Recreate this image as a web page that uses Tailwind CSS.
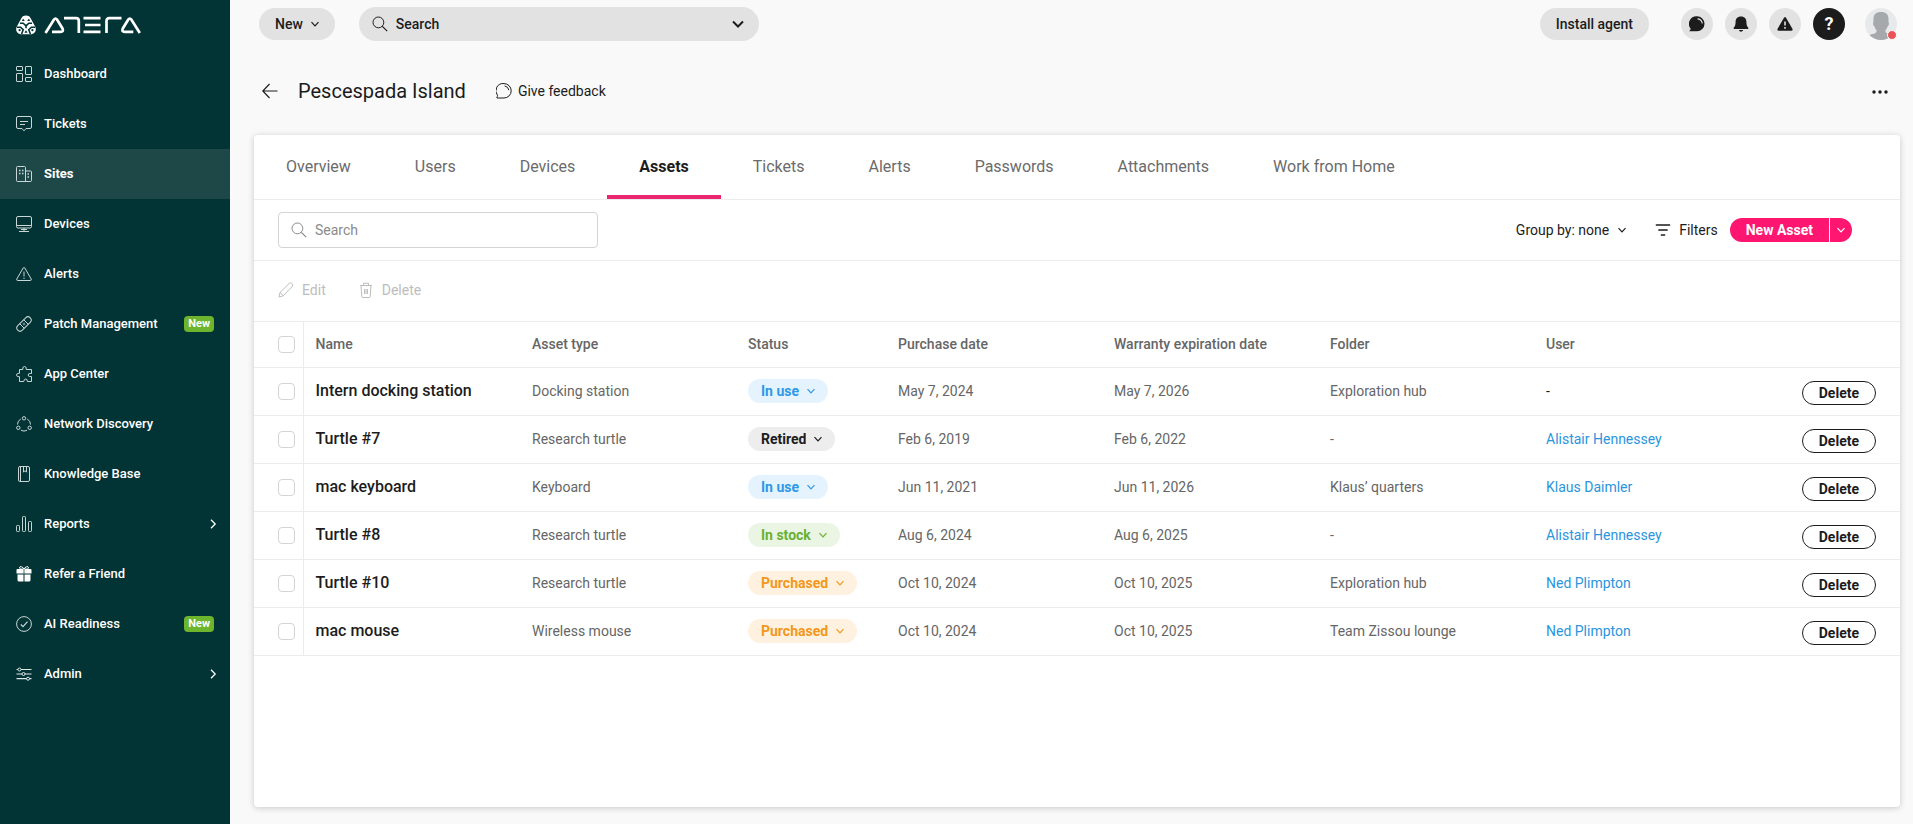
<!DOCTYPE html>
<html lang="en">

<head>
    <meta charset="UTF-8">
    <meta name="viewport" content="width=device-width, initial-scale=1.0">
    <title>Pescespada Island - Assets</title>
    <script src="https://cdn.jsdelivr.net/npm/@tailwindcss/browser@4"></script>
</head>

<body class="flex min-h-screen bg-[#f9f9f9] font-['Roboto',sans-serif] text-sm text-[#1c1c1c]">

    <!-- Shared icons -->
    <svg class="hidden">
        <symbol id="chevron-down" viewBox="0 0 10 10">
            <path d="M1.5 3.2 5 6.8 8.5 3.2" fill="none" stroke="currentColor" stroke-width="1.2" />
        </symbol>
        <symbol id="chevron-right" viewBox="0 0 10 10">
            <path d="M3 .8 7.2 5 3 9.2" fill="none" stroke="currentColor" stroke-width="1.3" />
        </symbol>
        <symbol id="search" viewBox="0 0 16 16">
            <g fill="none" stroke="currentColor">
                <circle cx="6.4" cy="6.4" r="5.4" />
                <path d="m10.3 10.3 4.9 4.9" stroke-width="1.2" />
            </g>
        </symbol>
    </svg>

    <!-- Sidebar -->
    <aside class="w-[230px] shrink-0 bg-[#023335] text-[13px] font-medium text-white">
        <a href="#" aria-label="Atera" class="flex h-[49px] items-center px-4 pb-2 pt-2">
            <svg class="h-5 w-[126px]" viewBox="0 0 126 20">
                <path fill="#fff"
                    d="M10 .6c2 0 3.500.8 4.500 2.400l4.500 8.200c2.200 4-.2 8-4.600 8H5.600C1.200 19.200-1.200 15.200 1 11.200L5.500 3C6.500 1.400 8 .6 10 .6Z" />
                <g fill="none" stroke="#023335" stroke-width="1.600">
                    <path d="M4 8.200h3.200L10 10.800l2.800-2.600H16M10 10.800v2.400M1 12.200h3.600l2.600 2.600-1.600 4.200M19 12.200h-3.600l-2.600 2.600 1.600 4.200" />
                </g>
                <g fill="#023335">
                    <path d="M7 3.400 8.800 6H6ZM13 3.400 11.200 6H14Z" />
                    <path d="m10 15.200 1.600 2.600H8.400Z" />
                    <circle cx="3.600" cy="15.200" r="1.100" />
                    <circle cx="16.400" cy="15.200" r="1.100" />
                </g>
                <!-- Wordmark -->
                <g fill="none" stroke="#fff" stroke-width="2.700">
                    <path d="M29.500 18 38 4.500q1.500-2 3 0l5.500 9q1.500 3.300-2 3.300h-8.500" />
                    <path d="M48 3.200h12q2.800 0 2.800 2.800v12" />
                    <path d="M67.500 3.200h17M69 10h15.500M67.500 16.800h17" />
                    <path d="M90.500 18V6q0-2.800 2.800-2.800h12.200" />
                    <path d="M123.800 18 115.300 4.500q-1.500-2-3 0l-5.500 9q-1.500 3.300 2 3.300h8.500" />
                </g>
            </svg>
        </a>

        <nav>
            <a href="#" class="flex h-[50px] items-center gap-3 px-4 hover:bg-white/10">
                <svg class="size-4 text-[#c9d6d6]" viewBox="0 0 16 16" fill="none" stroke="currentColor">
                    <rect x=".5" y=".5" width="6" height="4" rx=".5" />
                    <rect x="9.500" y=".5" width="6" height="8" rx=".5" />
                    <rect x=".5" y="7.500" width="6" height="8" rx=".5" />
                    <rect x="9.500" y="11.500" width="6" height="4" rx=".5" />
                </svg>
                Dashboard
            </a>
            <a href="#" class="flex h-[50px] items-center gap-3 px-4 hover:bg-white/10">
                <svg class="size-4 text-[#c9d6d6]" viewBox="0 0 16 16" fill="none" stroke="currentColor">
                    <path d="M2 .5h12q1.500 0 1.500 1.500v9q0 1.500-1.500 1.500h-4L8 14.800 6 12.500H2Q.5 12.500.5 11V2Q.5.5 2 .5ZM4 5.500h8M4 8.500h5" />
                </svg>
                Tickets
            </a>
            <a href="#" class="flex h-[50px] items-center gap-3 bg-[#1e4848] px-4 font-bold">
                <svg class="size-4 text-[#c9d6d6]" viewBox="0 0 16 16" fill="none" stroke="currentColor">
                    <path d="M9.500 15.500V1.500q0-1-1-1h-7q-1 0-1 1v13q0 1 1 1h13q1 0 1-1V6q0-1-1-1h-5" />
                    <path d="M3 4.500h1.500M6 4.500h1.500M3 7.500h1.500M6 7.500h1.500M11.500 8h1.500M11.500 11h1.500" stroke-width="1.500" />
                </svg>
                Sites
            </a>
            <a href="#" class="flex h-[50px] items-center gap-3 px-4 hover:bg-white/10">
                <svg class="size-4 text-[#c9d6d6]" viewBox="0 0 16 16" fill="none" stroke="currentColor">
                    <rect x=".5" y=".5" width="15" height="11.500" rx="1.500" />
                    <path d="M.5 9.500h15M8 12v3M3 15.500h10M5 13.500h6" />
                </svg>
                Devices
            </a>
            <a href="#" class="flex h-[50px] items-center gap-3 px-4 hover:bg-white/10">
                <svg class="size-4 text-[#c9d6d6]" viewBox="0 0 16 16" fill="none" stroke="currentColor">
                    <path d="M7.200 2q.8-1.200 1.600 0l6.400 11q.5 1.500-1 1.500H1.800q-1.500 0-1-1.500ZM8 5.500v5M8 11.700v1.300" />
                </svg>
                Alerts
            </a>
            <a href="#" class="flex h-[50px] items-center gap-3 px-4 hover:bg-white/10">
                <svg class="size-4 text-[#c9d6d6]" viewBox="0 0 16 16" fill="none" stroke="currentColor">
                    <rect x="-.8" y="4.800" width="17.600" height="6.400" rx="3.200" transform="rotate(-45 8 8)" />
                    <path d="m3.700 7.700 4.600 4.600M7.700 3.700l4.600 4.600" />
                    <path d="M8 6.800v.8M8 8.400v.8M6.800 8h.8M8.400 8h.8" />
                </svg>
                Patch Management
                <span class="ml-auto rounded bg-[#6cb52d] px-1 text-[11px] leading-4 font-bold">New</span>
            </a>
            <a href="#" class="flex h-[50px] items-center gap-3 px-4 hover:bg-white/10">
                <svg class="size-4 text-[#c9d6d6]" viewBox="0 0 16 16" fill="none" stroke="currentColor">
                    <path d="M3.500 3.500h3.300q-.6-3 1.700-3t1.700 3h5.300v4h-1.700q-1.600 0-1.600 1.500t1.600 1.500h1.700v5h-4.200q.2-2.500-1.600-2.500T7.800 15.500H3.500v-4.800Q.5 11 .5 9t3-1.700Z" />
                </svg>
                App Center
            </a>
            <a href="#" class="flex h-[50px] items-center gap-3 px-4 hover:bg-white/10">
                <svg class="size-4 text-[#c9d6d6]" viewBox="0 0 16 16" fill="none" stroke="currentColor">
                    <circle cx="8" cy="2.300" r="1.700" />
                    <circle cx="2.300" cy="11.800" r="1.700" />
                    <circle cx="13.700" cy="11.800" r="1.700" />
                    <path d="M4.800 3Q1.500 4.800 1.500 8.500M11.200 3q3.300 1.800 3.300 5.500M5 14.300q3 1.600 6 0" />
                </svg>
                Network Discovery
            </a>
            <a href="#" class="flex h-[50px] items-center gap-3 px-4 hover:bg-white/10">
                <svg class="size-4 text-[#c9d6d6]" viewBox="0 0 16 16" fill="none" stroke="currentColor">
                    <rect x="2.500" y=".5" width="11" height="15" rx="1.500" />
                    <path d="M4.500.5v15M7.500.5v5.700L9 4.700l1.500 1.500V.5" />
                </svg>
                Knowledge Base
            </a>
            <a href="#" class="flex h-[50px] items-center gap-3 px-4 hover:bg-white/10">
                <svg class="size-4 text-[#c9d6d6]" viewBox="0 0 16 16" fill="none" stroke="currentColor">
                    <rect x=".5" y="9.500" width="3" height="6" rx=".8" />
                    <rect x="6.500" y=".5" width="3" height="15" rx=".8" />
                    <rect x="12.500" y="5.500" width="3" height="10" rx=".8" />
                </svg>
                Reports
                <svg class="-mr-1 ml-auto size-[10px]"><use href="#chevron-right" /></svg>
            </a>
            <a href="#" class="flex h-[50px] items-center gap-3 px-4 hover:bg-white/10">
                <svg class="size-4" viewBox="0 0 16 16" fill="#fff">
                    <path d="M.5 4q0-1 1-1h13q1 0 1 1v3.500h-15ZM1.500 8.500h6v7H3q-1.500 0-1.500-1.500ZM8.500 8.500h6V14q0 1.500-1.500 1.500H8.500Z" />
                    <path d="M8 3Q3.500 3.500 3.500 1.800T5.500.8 8 3q.5-1.500 2.500-2.200t2 1T8 3Z" fill="none" stroke="#fff" />
                    <path d="M8 3v5" stroke="#023335" stroke-width=".7" />
                </svg>
                Refer a Friend
            </a>
            <a href="#" class="flex h-[50px] items-center gap-3 px-4 hover:bg-white/10">
                <svg class="size-4 text-[#c9d6d6]" viewBox="0 0 16 16" fill="none" stroke="currentColor">
                    <circle cx="8" cy="8" r="7.400" />
                    <path d="m4.800 8.500 2.200 2.200 4.500-5" stroke-width="1.200" />
                </svg>
                AI Readiness
                <span class="ml-auto rounded bg-[#6cb52d] px-1 text-[11px] leading-4 font-bold">New</span>
            </a>
            <a href="#" class="flex h-[50px] items-center gap-3 px-4 hover:bg-white/10">
                <svg class="size-4 text-[#dfe7e7]" viewBox="0 0 16 16" fill="none" stroke="currentColor">
                    <circle cx="3.500" cy="3.500" r="1.500" />
                    <circle cx="7.500" cy="8" r="1.500" />
                    <circle cx="12" cy="12.700" r="1.500" />
                    <path d="M.5 3.500H2M5 3.500h10.500M.5 8H6M9 8h6.500M.5 12.700h10M13.500 12.700h2" stroke-width="1.200" />
                </svg>
                Admin
                <svg class="-mr-1 ml-auto size-[10px]"><use href="#chevron-right" /></svg>
            </a>
        </nav>
    </aside>

    <div class="flex min-w-0 flex-1 flex-col">

        <!-- Top bar -->
        <header class="flex h-12 items-center pl-[29px] pr-4 font-medium">
            <button type="button" class="flex h-8 items-center gap-[7px] rounded-full bg-[#e2e2e2] pr-[15px] pl-4">
                New
                <svg class="size-[10px]"><use href="#chevron-down" /></svg>
            </button>
            <label class="ml-6 flex h-[34px] w-[400px] items-center gap-2 rounded-full bg-[#e2e2e2] px-[13px]">
                <svg class="size-4"><use href="#search" /></svg>
                <input type="search" aria-label="Search" placeholder="Search"
                    class="min-w-0 flex-1 placeholder:text-[#1c1c1c] focus:outline-none">
                <svg class="size-4" viewBox="0 0 16 16">
                    <path d="m3 5.500 5 5 5-5" fill="none" stroke="currentColor" stroke-width="2" />
                </svg>
            </label>

            <button type="button" class="ml-auto h-8 rounded-full bg-[#e2e2e2] px-4">Install agent</button>
            <div class="ml-8 flex gap-3">
                <button type="button" aria-label="Chat"
                    class="flex size-8 items-center justify-center rounded-full bg-[#e2e2e2]">
                    <svg class="size-4" viewBox="0 0 16 16">
                        <path fill="currentColor" d="M8 .3a7.500 7.500 0 1 1 0 15H.5q-.3-.6.8-1.600.5-.6.1-1.400A7.500 7.500 0 0 1 8 .3Z" />
                        <path d="M9 2.800q3.600.6 4.200 4.200" fill="none" stroke="#e2e2e2" stroke-width="1.200" stroke-linecap="round" />
                    </svg>
                </button>
                <button type="button" aria-label="Notifications"
                    class="flex size-8 items-center justify-center rounded-full bg-[#e2e2e2]">
                    <svg class="size-4" viewBox="0 0 16 16" fill="currentColor">
                        <path d="M8 .5c3.600 0 5.400 2.300 5.400 5.500 0 3.200.7 4.600 1.800 5.500.5.500.2 1.500-.6 1.500H1.400c-.8 0-1.100-1-.6-1.500 1.100-.9 1.800-2.300 1.800-5.500C2.600 2.800 4.400.5 8 .5ZM5.800 14h4.400q-.7 1.700-2.200 1.700T5.800 14Z" />
                    </svg>
                </button>
                <button type="button" aria-label="Alerts"
                    class="flex size-8 items-center justify-center rounded-full bg-[#e2e2e2]">
                    <svg class="size-4" viewBox="0 0 16 16">
                        <path fill="currentColor" d="M7 1.800q1-1.500 2 0l6.400 11q.7 1.900-1.100 1.900H1.700q-1.800 0-1.100-1.900Z" />
                        <path d="M8 5.500v4M8 11v1.700" stroke="#e2e2e2" stroke-width="1.600" />
                    </svg>
                </button>
                <button type="button" aria-label="Help"
                    class="flex size-8 items-center justify-center rounded-full bg-[#1c1c1c] text-lg font-bold text-white">?</button>
            </div>
            <button type="button" aria-label="Account" class="relative ml-5">
                <svg class="size-8" viewBox="0 0 32 32">
                    <clipPath id="avatar"><circle cx="16" cy="16" r="16" /></clipPath>
                    <g clip-path="url(#avatar)">
                        <path fill="#e8e9ea" d="M0 0h32v32H0z" />
                        <path fill="#a5a9ac" d="M16 4c5 0 7.500 2.500 7.500 7v3q.8.500.3 2.500t-1.300 2q-.7 2.500-2 3.500v2q1 1.500 5.500 2.500 2.500.6 4 3V32H2v-2.500q1.500-2.400 4-3 4.500-1 5.500-2.500v-2q-1.300-1-2-3.500-.8 0-1.300-2t.3-2.500v-3C8.500 6.500 11 4 16 4Z" />
                    </g>
                </svg>
                <span class="absolute right-0 bottom-0 size-[10px] rounded-full border border-[#f9f9f9] bg-[#ea5455]"></span>
            </button>
        </header>

        <!-- Page title -->
        <div class="flex h-[87px] items-center pr-6 pb-[2px] pl-8">
            <a href="#" aria-label="Back">
                <svg class="size-4" viewBox="0 0 16 16" fill="none" stroke="currentColor" stroke-width="1.200">
                    <path d="M15.500 8H1M7.500 1 .8 8l6.700 7" />
                </svg>
            </a>
            <h1 class="ml-5 text-xl">Pescespada Island</h1>
            <a href="#" class="ml-[30px] flex items-center gap-1.5">
                <svg class="size-4" viewBox="0 0 16 16" fill="none" stroke="currentColor">
                    <path d="M8 .6a7.200 7.200 0 1 1 0 14.400H1q-.6-.3.3-1.400.5-.6.100-1.400A7.200 7.200 0 0 1 8 .6Z" />
                    <path d="M9 3q3.200.5 3.800 3.800" stroke-linecap="round" />
                </svg>
                Give feedback
            </a>
            <button type="button" aria-label="More" class="ml-auto">
                <svg class="h-4 w-[18px]" viewBox="0 0 18 16" fill="currentColor">
                    <circle cx="3" cy="9" r="1.700" />
                    <circle cx="9" cy="9" r="1.700" />
                    <circle cx="15" cy="9" r="1.700" />
                </svg>
            </button>
        </div>

        <main class="mr-[13px] mb-[17px] ml-6 flex-1 rounded bg-white shadow-[0_1px_6px_rgba(0,0,0,0.2)]">

            <!-- Tabs -->
            <nav class="flex h-[65px] border-b border-[#ececec] text-base text-[#6b6b6b]">
                <a href="#" class="flex items-center border-b-4 border-transparent px-8 pt-1">Overview</a>
                <a href="#" class="flex items-center border-b-4 border-transparent px-8 pt-1">Users</a>
                <a href="#" class="flex items-center border-b-4 border-transparent px-8 pt-1">Devices</a>
                <a href="#" class="flex items-center border-b-4 border-[#e9266f] px-8 pt-1 font-bold text-[#1c1c1c]">Assets</a>
                <a href="#" class="flex items-center border-b-4 border-transparent px-8 pt-1">Tickets</a>
                <a href="#" class="flex items-center border-b-4 border-transparent px-8 pt-1">Alerts</a>
                <a href="#" class="flex items-center border-b-4 border-transparent px-8 pt-1">Passwords</a>
                <a href="#" class="flex items-center border-b-4 border-transparent px-8 pt-1">Attachments</a>
                <a href="#" class="flex items-center border-b-4 border-transparent px-8 pt-1">Work from Home</a>
            </nav>

            <!-- Toolbar -->
            <div class="flex h-[61px] items-center border-b border-[#ececec] pl-6 pr-12">
                <label class="flex h-9 w-80 items-center gap-2 rounded border border-[#d4d4d4] px-3 text-[#8a8a8a]">
                    <svg class="size-4"><use href="#search" /></svg>
                    <input type="search" aria-label="Search assets" placeholder="Search"
                        class="min-w-0 flex-1 placeholder:text-[#8a8a8a] focus:outline-none">
                </label>
                <div class="relative ml-auto flex items-center">
                    <label for="group-by">Group by:&nbsp;</label>
                    <select id="group-by" class="field-sizing-content appearance-none pr-[18px]">
                        <option>none</option>
                    </select>
                    <svg class="pointer-events-none absolute right-0 size-[10px]"><use href="#chevron-down" /></svg>
                </div>
                <button type="button" class="ml-7 flex items-center gap-2">
                    <svg class="size-4" viewBox="0 0 16 16" fill="none" stroke="currentColor" stroke-width="1.700" stroke-linecap="round">
                        <path d="M1.500 3h13M4 8h8M6.500 13h3" />
                    </svg>
                    Filters
                </button>
                <div class="ml-3 flex h-6 gap-px font-bold text-white">
                    <button type="button" class="rounded-l-full bg-[#ff1670] px-4">New Asset</button>
                    <button type="button" aria-label="More options" class="rounded-r-full bg-[#ff1670] px-1.5">
                        <svg class="size-[10px]"><use href="#chevron-down" /></svg>
                    </button>
                </div>
            </div>

            <!-- Bulk actions -->
            <div class="flex h-[61px] items-center gap-8 border-b border-[#ececec] px-6 pb-[2px] text-[#bdbdbd]">
                <button type="button" disabled class="flex items-center gap-2">
                    <svg class="size-4" viewBox="0 0 16 16" fill="none" stroke="currentColor">
                        <path d="m1 15 1-4.500L11.300 1.300q1.200-1 2.500.2t.6 2.700L5.300 13.700ZM2 10.500l3.300 3.200" />
                    </svg>
                    Edit
                </button>
                <button type="button" disabled class="flex items-center gap-2">
                    <svg class="size-4" viewBox="0 0 16 16" fill="none" stroke="currentColor">
                        <path d="M2 3.500h12M5.500 3.500V1.200h5v2.300M3 3.500l.8 11q0 1 1 1h6.400q1 0 1-1l.8-11M6.500 7v5M9.500 7v5M8 7v5" />
                    </svg>
                    Delete
                </button>
            </div>

            <!-- Assets table -->
            <table class="w-full table-fixed text-left text-[#666]">
                <colgroup>
                    <col class="w-[49px]">
                    <col class="w-[217px]">
                    <col class="w-[216px]">
                    <col class="w-[150px]">
                    <col class="w-[216px]">
                    <col class="w-[216px]">
                    <col class="w-[216px]">
                    <col class="w-[216px]">
                    <col>
                </colgroup>
                <thead>
                    <tr class="h-[45px] border-b border-[#ececec]">
                        <th class="border-r border-[#ececec] pl-6">
                            <input type="checkbox" aria-label="Select all" class="block size-[17px] appearance-none rounded border border-[#d4d4d4]">
                        </th>
                        <th class="px-3 font-medium">Name</th>
                        <th class="px-3 font-medium">Asset type</th>
                        <th class="px-3 font-medium">Status</th>
                        <th class="px-3 font-medium">Purchase date</th>
                        <th class="px-3 font-medium">Warranty expiration date</th>
                        <th class="px-3 font-medium">Folder</th>
                        <th class="px-3 font-medium">User</th>
                        <th></th>
                    </tr>
                </thead>
                <tbody>
                    <tr class="h-12 border-b border-[#ececec]">
                        <td class="border-r border-[#ececec] pl-6">
                            <input type="checkbox" aria-label="Select Intern docking station" class="block size-[17px] appearance-none rounded border border-[#d4d4d4]">
                        </td>
                        <td class="px-3 text-base font-medium text-[#1c1c1c]">Intern docking station</td>
                        <td class="px-3">Docking station</td>
                        <td class="px-3">
                            <div class="relative flex w-fit items-center text-[#2f98e8]">
                                <select aria-label="Status" class="field-sizing-content h-6 appearance-none rounded-full bg-[#e4f3fd] pr-[29px] pl-[13px] font-bold">
                                    <option>In use</option>
                                </select>
                                <svg class="pointer-events-none absolute right-3 size-[10px]"><use href="#chevron-down" /></svg>
                            </div>
                        </td>
                        <td class="px-3">May 7, 2024</td>
                        <td class="px-3">May 7, 2026</td>
                        <td class="px-3">Exploration hub</td>
                        <td class="px-3 text-[#1c1c1c]">-</td>
                        <td class="pt-1 pr-6">
                            <button type="button" class="ml-auto block h-6 rounded-full border border-[#1c1c1c] px-4 font-bold text-[#1c1c1c]">Delete</button>
                        </td>
                    </tr>
                    <tr class="h-12 border-b border-[#ececec]">
                        <td class="border-r border-[#ececec] pl-6">
                            <input type="checkbox" aria-label="Select Turtle #7" class="block size-[17px] appearance-none rounded border border-[#d4d4d4]">
                        </td>
                        <td class="px-3 text-base font-medium text-[#1c1c1c]">Turtle #7</td>
                        <td class="px-3">Research turtle</td>
                        <td class="px-3">
                            <div class="relative flex w-fit items-center text-[#1c1c1c]">
                                <select aria-label="Status" class="field-sizing-content h-6 appearance-none rounded-full bg-[#ededed] pr-[29px] pl-[13px] font-bold">
                                    <option>Retired</option>
                                </select>
                                <svg class="pointer-events-none absolute right-3 size-[10px]"><use href="#chevron-down" /></svg>
                            </div>
                        </td>
                        <td class="px-3">Feb 6, 2019</td>
                        <td class="px-3">Feb 6, 2022</td>
                        <td class="px-3">-</td>
                        <td class="px-3"><a href="#" class="text-[#2b95dd]">Alistair Hennessey</a></td>
                        <td class="pt-1 pr-6">
                            <button type="button" class="ml-auto block h-6 rounded-full border border-[#1c1c1c] px-4 font-bold text-[#1c1c1c]">Delete</button>
                        </td>
                    </tr>
                    <tr class="h-12 border-b border-[#ececec]">
                        <td class="border-r border-[#ececec] pl-6">
                            <input type="checkbox" aria-label="Select mac keyboard" class="block size-[17px] appearance-none rounded border border-[#d4d4d4]">
                        </td>
                        <td class="px-3 text-base font-medium text-[#1c1c1c]">mac keyboard</td>
                        <td class="px-3">Keyboard</td>
                        <td class="px-3">
                            <div class="relative flex w-fit items-center text-[#2f98e8]">
                                <select aria-label="Status" class="field-sizing-content h-6 appearance-none rounded-full bg-[#e4f3fd] pr-[29px] pl-[13px] font-bold">
                                    <option>In use</option>
                                </select>
                                <svg class="pointer-events-none absolute right-3 size-[10px]"><use href="#chevron-down" /></svg>
                            </div>
                        </td>
                        <td class="px-3">Jun 11, 2021</td>
                        <td class="px-3">Jun 11, 2026</td>
                        <td class="px-3">Klaus’ quarters</td>
                        <td class="px-3"><a href="#" class="text-[#2b95dd]">Klaus Daimler</a></td>
                        <td class="pt-1 pr-6">
                            <button type="button" class="ml-auto block h-6 rounded-full border border-[#1c1c1c] px-4 font-bold text-[#1c1c1c]">Delete</button>
                        </td>
                    </tr>
                    <tr class="h-12 border-b border-[#ececec]">
                        <td class="border-r border-[#ececec] pl-6">
                            <input type="checkbox" aria-label="Select Turtle #8" class="block size-[17px] appearance-none rounded border border-[#d4d4d4]">
                        </td>
                        <td class="px-3 text-base font-medium text-[#1c1c1c]">Turtle #8</td>
                        <td class="px-3">Research turtle</td>
                        <td class="px-3">
                            <div class="relative flex w-fit items-center text-[#69b132]">
                                <select aria-label="Status" class="field-sizing-content h-6 appearance-none rounded-full bg-[#ebf5e4] pr-[29px] pl-[13px] font-bold">
                                    <option>In stock</option>
                                </select>
                                <svg class="pointer-events-none absolute right-3 size-[10px]"><use href="#chevron-down" /></svg>
                            </div>
                        </td>
                        <td class="px-3">Aug 6, 2024</td>
                        <td class="px-3">Aug 6, 2025</td>
                        <td class="px-3">-</td>
                        <td class="px-3"><a href="#" class="text-[#2b95dd]">Alistair Hennessey</a></td>
                        <td class="pt-1 pr-6">
                            <button type="button" class="ml-auto block h-6 rounded-full border border-[#1c1c1c] px-4 font-bold text-[#1c1c1c]">Delete</button>
                        </td>
                    </tr>
                    <tr class="h-12 border-b border-[#ececec]">
                        <td class="border-r border-[#ececec] pl-6">
                            <input type="checkbox" aria-label="Select Turtle #10" class="block size-[17px] appearance-none rounded border border-[#d4d4d4]">
                        </td>
                        <td class="px-3 text-base font-medium text-[#1c1c1c]">Turtle #10</td>
                        <td class="px-3">Research turtle</td>
                        <td class="px-3">
                            <div class="relative flex w-fit items-center text-[#f2981b]">
                                <select aria-label="Status" class="field-sizing-content h-6 appearance-none rounded-full bg-[#fef1e0] pr-[29px] pl-[13px] font-bold">
                                    <option>Purchased</option>
                                </select>
                                <svg class="pointer-events-none absolute right-3 size-[10px]"><use href="#chevron-down" /></svg>
                            </div>
                        </td>
                        <td class="px-3">Oct 10, 2024</td>
                        <td class="px-3">Oct 10, 2025</td>
                        <td class="px-3">Exploration hub</td>
                        <td class="px-3"><a href="#" class="text-[#2b95dd]">Ned Plimpton</a></td>
                        <td class="pt-1 pr-6">
                            <button type="button" class="ml-auto block h-6 rounded-full border border-[#1c1c1c] px-4 font-bold text-[#1c1c1c]">Delete</button>
                        </td>
                    </tr>
                    <tr class="h-12 border-b border-[#ececec]">
                        <td class="border-r border-[#ececec] pl-6">
                            <input type="checkbox" aria-label="Select mac mouse" class="block size-[17px] appearance-none rounded border border-[#d4d4d4]">
                        </td>
                        <td class="px-3 text-base font-medium text-[#1c1c1c]">mac mouse</td>
                        <td class="px-3">Wireless mouse</td>
                        <td class="px-3">
                            <div class="relative flex w-fit items-center text-[#f2981b]">
                                <select aria-label="Status" class="field-sizing-content h-6 appearance-none rounded-full bg-[#fef1e0] pr-[29px] pl-[13px] font-bold">
                                    <option>Purchased</option>
                                </select>
                                <svg class="pointer-events-none absolute right-3 size-[10px]"><use href="#chevron-down" /></svg>
                            </div>
                        </td>
                        <td class="px-3">Oct 10, 2024</td>
                        <td class="px-3">Oct 10, 2025</td>
                        <td class="px-3">Team Zissou lounge</td>
                        <td class="px-3"><a href="#" class="text-[#2b95dd]">Ned Plimpton</a></td>
                        <td class="pt-1 pr-6">
                            <button type="button" class="ml-auto block h-6 rounded-full border border-[#1c1c1c] px-4 font-bold text-[#1c1c1c]">Delete</button>
                        </td>
                    </tr>
                </tbody>
            </table>
        </main>
    </div>

</body>

</html>
